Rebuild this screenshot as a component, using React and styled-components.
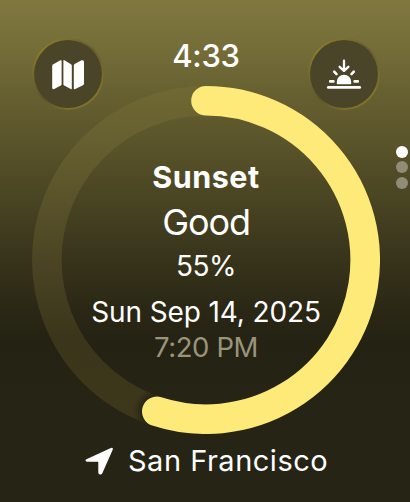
import React from 'react';
import styled, { createGlobalStyle } from 'styled-components';


const GlobalStyle = createGlobalStyle`
  body {
    margin: 0;
    background: #262415;
  }
`;

const Screen = styled.div`
  position: relative;
  box-sizing: border-box;
  width: 410px;
  height: 502px;
  padding-top: 38px;
  overflow: hidden;
  color: #fff;
  font-family: Inter, Roboto, sans-serif;
  background: linear-gradient(
    to bottom,
    #80783f 0,
    #746d38 50px,
    #666031 95px,
    #575229 150px,
    #494422 200px,
    #39351c 255px,
    #2a2715 310px,
    #242213 345px,
    #262415 400px,
    #262415 502px
  );
`;

const Header = styled.header`
  display: flex;
  justify-content: space-between;
  height: 72px;
  margin: 0 30px 0 32px;
`;

const RoundButton = styled.button`
  box-sizing: border-box;
  display: flex;
  align-items: center;
  justify-content: center;
  width: 72px;
  height: 72px;
  padding: 0;
  border: 2px solid transparent;
  border-radius: 50%;
  background:
    linear-gradient(#4a4528, #4a4528) padding-box,
    conic-gradient(
      #7c712a,
      #665e2d 45deg,
      #73692b 80deg,
      #80742a 120deg,
      #7c7029 180deg,
      #5c562a 225deg,
      #73692b 265deg,
      #8a7c28 310deg,
      #7c712a
    ) border-box;
  color: #fff;
`;

const Clock = styled.time`
  font-size: 31px;
  font-weight: 500;
  line-height: 35px;
  letter-spacing: -0.3px;
`;

const Dial = styled.main`
  display: grid;
  width: 348px;
  height: 348px;
  margin: -24px 0 0 32px;

  > * {
    grid-area: 1 / 1;
  }
`;

const Details = styled.div`
  display: flex;
  flex-direction: column;
  align-items: center;
  padding-top: 68px;
`;

const Line = styled.div`
  font-size: ${({ $size }) => $size}px;
  font-weight: ${({ $weight }) => $weight || 400};
  line-height: ${({ $height }) => $height}px;
  letter-spacing: ${({ $spacing }) => $spacing || 0}px;
  color: ${({ $muted }) => ($muted ? '#99947a' : '#fff')};
  white-space: nowrap;
`;

const Location = styled.footer`
  display: flex;
  align-items: center;
  gap: 14px;
  height: 53px;
  padding-left: 85px;
`;

const PageDots = styled.nav`
  position: absolute;
  top: 145.5px;
  right: 2px;
  display: flex;
  flex-direction: column;
  gap: 4px;
`;

const Dot = styled.span`
  width: 12px;
  height: 12px;
  margin-bottom: -0.3px;
  border-radius: 50%;
  background: ${({ $active }) => ($active ? '#fff' : '#918c75')};
`;

const MapIcon = () => (
  <svg width="34" height="32" viewBox="0 -1 34 32" fill="currentColor">
    <path d="M1.2 7.4Q1.2 6 2.4 5.3L9.4 1.3Q10.6.8 10.6 2V25.2Q10.6 26 9.8 26.5L3.2 30.1Q1.2 30.7 1.2 28.5Z" />
    <path d="M12.4 1.6Q12.6.8 13.4 1.3L20 5.2Q20.8 5.8 20.8 6.6V29.5Q20.8 30.5 19.8 29.9L13.2 26.6Q12.4 26.2 12.4 25.2Z" />
    <path d="M22.8 6.6Q22.8 5.6 23.6 5.1L30.6 1.3Q33 .6 33 3V24.4Q33 25.6 32 26.3L24.2 30.1Q22.8 30.7 22.8 29.5Z" />
  </svg>
);

const SunsetIcon = () => (
  <svg width="36" height="32" viewBox="0 0 36 32" fill="none" stroke="currentColor" strokeLinecap="round" strokeLinejoin="round">
    <path strokeWidth="2.3" d="M18 2.7V12.6M13.6 8.8L18 12.8L22.4 8.8" />
    <path strokeWidth="2.6" d="M8.2 13.7L10.5 16.1M27.8 13.7L25.5 16.1M4.2 23.4H7.4M31.8 23.4H28.6" />
    <path fill="currentColor" stroke="none" d="M10.8 25.4V23.9A7.2 7.2 0 0 1 25.2 23.9V25.4Q25.2 26.3 24.4 26.3H11.6Q10.8 26.3 10.8 25.4Z" />
    <path strokeWidth="2.8" d="M2.3 29.4H33.7" />
  </svg>
);

const ArrowIcon = () => (
  <svg width="29" height="28" viewBox="0 0 29 28" fill="currentColor">
    <path d="M1.4 12.2L25.9 1Q28.6.2 27.7 2.8L17.2 26.4Q16.4 27.8 15 27.5Q13.3 27.1 13.3 25.4V15.2Q13.3 14.8 12.9 14.8H2.6Q.8 14.7.5 13.5Q.4 12.7 1.4 12.2Z" />
  </svg>
);

const RADIUS = 159.2;

// The far end of the arc casts a soft shadow on the track.
const Ring = ({ percent }) => {
  const angle = (percent / 100) * 2 * Math.PI;
  const endX = 174 + RADIUS * Math.sin(angle);
  const endY = 174 - RADIUS * Math.cos(angle);

  return (
    <svg width="348" height="348" viewBox="0 0 348 348" fill="none">
      <defs>
        <mask id="track">
          <circle cx="174" cy="174" r={RADIUS} stroke="#fff" strokeWidth="29.6" />
        </mask>
        <radialGradient id="shadow">
          <stop offset="0.55" stopColor="#1f1d12" stopOpacity="0.85" />
          <stop offset="0.78" stopColor="#1f1d12" stopOpacity="0.35" />
          <stop offset="1" stopColor="#1f1d12" stopOpacity="0" />
        </radialGradient>
        <linearGradient id="trackFill" x1="0" y1="0" x2="0" y2="348" gradientUnits="userSpaceOnUse">
          <stop offset="0" stopColor="#706934" />
          <stop offset="0.22" stopColor="#625b2e" />
          <stop offset="0.5" stopColor="#4b4524" />
          <stop offset="0.72" stopColor="#3b361b" />
          <stop offset="1" stopColor="#3d381b" />
        </linearGradient>
      </defs>
      <circle cx="174" cy="174" r={RADIUS} stroke="url(#trackFill)" strokeWidth="29.6" />
      <circle cx={endX} cy={endY} r="24" fill="url(#shadow)" mask="url(#track)" />
      <path
        d={`M174 ${174 - RADIUS}A${RADIUS} ${RADIUS} 0 ${percent > 50 ? 1 : 0} 1 ${endX} ${endY}`}
        stroke="#fdea78"
        strokeWidth="29.6"
        strokeLinecap="round"
      />
    </svg>
  );
};

const App = () => {
  return (
    <>
      <GlobalStyle />
      <Screen>
        <Header>
          <RoundButton aria-label="Map"><MapIcon /></RoundButton>
          <Clock>4:33</Clock>
          <RoundButton aria-label="Sunset"><SunsetIcon /></RoundButton>
        </Header>

        <Dial>
          <Ring percent={55} />
          <Details>
            <Line $size={30.5} $height={46} $weight={700} $spacing={0.5}>Sunset</Line>
            <Line $size={36} $height={45} $spacing={-1.1}>Good</Line>
            <Line $size={28} $height={43} $spacing={-0.5}>55%</Line>
            <Line $size={28} $height={48} $spacing={-0.12}>Sun Sep 14, 2025</Line>
            <Line $size={27.5} $height={22} $spacing={-0.4} $muted>7:20 PM</Line>
          </Details>
        </Dial>

        <Location>
          <ArrowIcon />
          <Line $size={29} $height={34} $spacing={0.5}>San Francisco</Line>
        </Location>

        <PageDots>
          <Dot $active />
          <Dot />
          <Dot />
        </PageDots>
      </Screen>
    </>
  );
};

export default App;
